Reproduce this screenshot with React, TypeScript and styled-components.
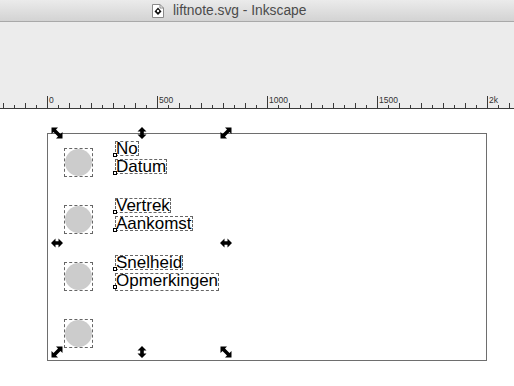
import styled, { createGlobalStyle } from "styled-components"

const GlobalStyle = createGlobalStyle`
  html, body {
    margin: 0;
    padding: 0;
    background: #ffffff;
    overflow: hidden;
  }
  body {
    font-family: "Liberation Sans", Arial, sans-serif;
  }
  *, *::before, *::after {
    box-sizing: border-box;
  }
`

const Window = styled.div`
  width: 514px;
  height: 386px;
  display: flex;
  flex-direction: column;
  overflow: hidden;
`

const TitleBar = styled.div`
  height: 22px;
  flex: none;
  display: flex;
  align-items: center;
  gap: 9px;
  padding-left: 152px;
  background: linear-gradient(#ebebeb, #d3d3d3);
  border-bottom: 1px solid #a9a9a9;
  color: #4b4b4b;
  font-size: 13.8px;
`

const TitleText = styled.span`
  line-height: 1;
  padding-top: 1px;
`

const ToolArea = styled.div`
  height: 87px;
  flex: none;
  display: flex;
  flex-direction: column;
  justify-content: flex-end;
  background: #ececec;
`

const Canvas = styled.div`
  position: relative;
  flex: 1;
  background: #ffffff;
  padding: 24px 0 0 47px;
`

const Page = styled.div`
  width: 440px;
  height: 228px;
  border: 1px solid #6e6e6e;
  padding: 7px 0 0 16px;
  display: flex;
  flex-direction: column;
`

const Row = styled.div`
  height: 57px;
  flex: none;
  display: flex;
  align-items: flex-start;
`

const DotBox = styled.div`
  margin-top: 7px;
  width: 29px;
  height: 29px;
  border: 1px dashed #666;
  display: flex;
  align-items: center;
  justify-content: center;
`

const Dot = styled.div`
  width: 27px;
  height: 27px;
  border-radius: 50%;
  background: #cccccc;
`

const TextBlock = styled.div`
  margin: 0 0 0 22px;
  display: flex;
  flex-direction: column;
  gap: 3px;
`

const Line = styled.div<{ $tall?: boolean }>`
  position: relative;
  width: fit-content;
  height: ${({ $tall }) => ($tall ? 18 : 15)}px;
  line-height: 13px;
  border: 1px dashed #666;
  font-size: 17px;
  color: #000;
  white-space: nowrap;
`

const Anchor = styled.span`
  position: absolute;
  left: -3px;
  top: 11px;
  width: 4px;
  height: 4px;
  border: 1px solid #000;
  background: #fff;
`

const Selection = styled.div`
  position: absolute;
  left: 51px;
  top: 18px;
  width: 181px;
  height: 231px;
  display: grid;
  grid-template-columns: 12px 12px 12px;
  grid-template-rows: 12px 12px 12px;
  justify-content: space-between;
  align-content: space-between;
  pointer-events: none;
`

const Handle = styled.svg`
  width: 12px;
  height: 12px;
  display: block;
`

type HandleKind = "nwse" | "nesw" | "ew" | "ns" | "none"

const ScaleHandle = ({ kind }: { kind: HandleKind }) => {
  if (kind === "none") return <span />
  const diag = "0.5,0.5 7,0.5 5,2.5 9.5,7 11.5,5 11.5,11.5 5,11.5 7,9.5 2.5,5 0.5,7"
  const horiz = "0,6 4.5,1.5 4.5,4.2 7.5,4.2 7.5,1.5 12,6 7.5,10.5 7.5,7.8 4.5,7.8 4.5,10.5"
  const transform =
    kind === "nesw" ? "translate(12 0) scale(-1 1)" : kind === "ns" ? "rotate(90 6 6)" : undefined
  return (
    <Handle viewBox="0 0 12 12">
      <polygon points={kind === "nwse" || kind === "nesw" ? diag : horiz} fill="#000" transform={transform} />
    </Handle>
  )
}

const DocIcon = () => (
  <svg width="12" height="14" viewBox="0 0 12 14">
    <path d="M0.5 0.5 H8 L11.5 4 V13.5 H0.5 Z" fill="#fff" stroke="#8a8a8a" />
    <path d="M8 0.5 V4 H11.5" fill="none" stroke="#8a8a8a" />
    <path d="M6 3.5 L9.5 7.5 L6 11 L2.5 7.5 Z" fill="#111" />
    <circle cx="6" cy="7" r="1.2" fill="#fff" />
  </svg>
)

const Ruler = () => {
  const ticks = []
  for (let x = 3; x < 514; x += 11) {
    const k = Math.round((x - 47) / 11)
    const major = k % 10 === 0
    const medium = !major && k % 2 === 0
    const y = major ? 1 : medium ? 8 : 10
    ticks.push(<rect key={x} x={x} y={y} width={1} height={13 - y} fill="#3a3a3a" />)
  }
  const labels: [number, string][] = [
    [47, "0"],
    [157, "500"],
    [267, "1000"],
    [377, "1500"],
    [487, "2k"],
  ]
  return (
    <svg width="514" height="14" style={{ display: "block" }}>
      {ticks}
      <rect x={0} y={13} width={514} height={1} fill="#3a3a3a" />
      {labels.map(([x, t]) => (
        <text key={t} x={x + 2} y={7.5} fontSize="8.5" fill="#333" fontFamily="'Liberation Sans', Arial, sans-serif">
          {t}
        </text>
      ))}
    </svg>
  )
}

const rows: [string, string][] = [
  ["No", "Datum"],
  ["Vertrek", "Aankomst"],
  ["Snelheid", "Opmerkingen"],
]

const descends = (s: string) => /[gjpqy]/.test(s)

const handles: HandleKind[] = ["nwse", "ns", "nesw", "ew", "none", "ew", "nesw", "ns", "nwse"]

export default function App() {
  return (
    <Window>
      <GlobalStyle />
      <TitleBar>
        <DocIcon />
        <TitleText>liftnote.svg - Inkscape</TitleText>
      </TitleBar>
      <ToolArea>
        <Ruler />
      </ToolArea>
      <Canvas>
        <Page>
          {rows.map(([a, b]) => (
            <Row key={a}>
              <DotBox>
                <Dot />
              </DotBox>
              <TextBlock>
                <Line $tall={descends(a)}>
                  {a}
                  <Anchor />
                </Line>
                <Line $tall={descends(b)}>
                  {b}
                  <Anchor />
                </Line>
              </TextBlock>
            </Row>
          ))}
          <Row>
            <DotBox>
              <Dot />
            </DotBox>
          </Row>
        </Page>
        <Selection>
          {handles.map((h, i) => (
            <ScaleHandle key={i} kind={h} />
          ))}
        </Selection>
      </Canvas>
    </Window>
  )
}
